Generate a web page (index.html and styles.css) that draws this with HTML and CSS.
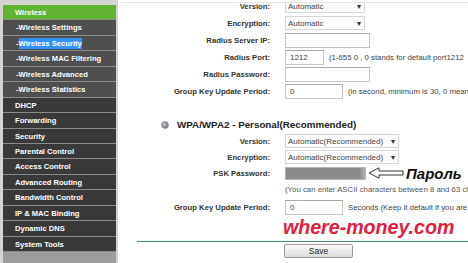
FILE: index.html
```html
<!DOCTYPE html>
<html lang="en">
<head>
    <meta charset="UTF-8">
    <meta name="viewport" content="width=device-width, initial-scale=1.0">
    <title>Wireless Security</title>
    <link rel="stylesheet" href="styles.css">
</head>
<body>
    <div class="page">
        <div class="side">
            <ul class="menu">
                <li class="on"><a href="#">Wireless</a></li>
                <li class="sub"><a href="#">-Wireless Settings</a></li>
                <li class="sub"><a href="#">-<span class="pick">Wireless Security</span></a></li>
                <li class="sub"><a href="#">-Wireless MAC Filtering</a></li>
                <li class="sub"><a href="#">-Wireless Advanced</a></li>
                <li class="sub"><a href="#">-Wireless Statistics</a></li>
                <li><a href="#">DHCP</a></li>
                <li><a href="#">Forwarding</a></li>
                <li><a href="#">Security</a></li>
                <li><a href="#">Parental Control</a></li>
                <li><a href="#">Access Control</a></li>
                <li><a href="#">Advanced Routing</a></li>
                <li><a href="#">Bandwidth Control</a></li>
                <li><a href="#">IP &amp; MAC Binding</a></li>
                <li><a href="#">Dynamic DNS</a></li>
                <li><a href="#">System Tools</a></li>
            </ul>
            <div class="side_foot"></div>
        </div>

        <div class="con">
            <!-- Radius (Enterprise) -->
            <div class="sec1">
                <div class="row">
                    <label>Version:</label>
                    <div class="sel w80"><span>Automatic</span><i>&#9662;</i></div>
                </div>
                <div class="row">
                    <label>Encryption:</label>
                    <div class="sel w80"><span>Automatic</span><i>&#9662;</i></div>
                </div>
                <div class="row">
                    <label>Radius Server IP:</label>
                    <input class="txt w85" type="text" value="">
                </div>
                <div class="row">
                    <label>Radius Port:</label>
                    <input class="txt w39" type="text" value="1212">
                    <span class="hint">(1-655 0 , 0 stands for default port1212</span>
                </div>
                <div class="row">
                    <label>Radius Password:</label>
                    <input class="txt w85" type="text" value="">
                </div>
                <div class="row">
                    <label>Group Key Update Period:</label>
                    <input class="txt w58" type="text" value="0">
                    <span class="hint">(in second, minimum is 30, 0 means no update)</span>
                </div>
            </div>

            <!-- WPA/WPA2 Personal -->
            <div class="sec2">
                <div class="title">
                    <span class="radio"></span>
                    <b>WPA/WPA2 - Personal(Recommended)</b>
                </div>
                <div class="row">
                    <label>Version:</label>
                    <div class="sel w114"><span>Automatic(Recommended)</span><i>&#9662;</i></div>
                </div>
                <div class="row">
                    <label>Encryption:</label>
                    <div class="sel w114"><span>Automatic(Recommended)</span><i>&#9662;</i></div>
                </div>
                <div class="row">
                    <label>PSK Password:</label>
                    <div class="psk"></div>
                    <svg class="arrow" width="36" height="12" viewBox="0 0 36 12">
                        <polygon points="1,6 11,0.8 11,4 35,4 35,8 11,8 11,11.2" fill="#fff" stroke="#333" stroke-width="1"/>
                    </svg>
                    <span class="word">Пароль</span>
                </div>
                <div class="row note">
                    <span class="hint">(You can enter ASCII characters between 8 and 63 characters or 8 and 64 Hexadecimal characters.)</span>
                </div>
                <div class="row gk">
                    <label>Group Key Update Period:</label>
                    <input class="txt w58" type="text" value="0">
                    <span class="hint">Seconds (Keep it default if you are not sure, minimum is 30, 0 means no update)</span>
                </div>
                <div class="mark">where-money.com</div>
            </div>

            <div class="foot">
                <button type="button" class="btn">Save</button>
            </div>
        </div>
    </div>
</body>
</html>
```

FILE: styles.css
```css
/* 초기화 */
body,ul{margin: 0; padding: 0;}
ul{list-style: none;}
a{text-decoration: none; color: #fff;}
body{
    font-family: "Liberation Sans", Arial, sans-serif;
    background-color: #fff; color: #333;
    width: 468px; height: 263px; overflow: hidden;
}

/* 레이아웃 */
.page{display: flex; height: 263px;}

/* 왼쪽 메뉴 */
.side{
    width: 113px; flex: none;
    display: flex; flex-direction: column;
    background-color: #d4d4d4;
    padding: 5px 2px 0 3px;
}
.menu li a{
    display: block; height: 14.44px; line-height: 15px;
    padding-left: 12px;
    font-size: 7.6px; font-weight: bold;
    background-color: #393939;
    border-bottom: 1px solid #8a8a8a;
    white-space: nowrap; overflow: hidden;
}
.menu li.sub a{background-color: #4f4f4f; padding-left: 13px;}
.menu li.on a{background-color: #62b332; padding-left: 12px;}
.menu .pick{background-color: #3392ff; padding: 1px 0;}
.side_foot{flex: 1; background-color: #9c9c9c;}

/* 오른쪽 내용 */
.con{
    flex: 1; min-width: 0;
    margin-left: 2px; margin-top: 2px;
    border-top: 1px solid #e4e4e4;
    overflow: hidden;
}
.sec1{margin-top: -5.5px;}
.row{display: flex; align-items: center; height: 17px; white-space: nowrap;}
.row label{
    flex: none; width: 150px; margin-right: 15px;
    text-align: right;
    font-size: 7.7px; font-weight: bold; color: #333;
}
.hint{font-size: 7.8px; color: #444; margin-left: 5px;}

.sel{
    display: flex; justify-content: space-between; align-items: center;
    box-sizing: border-box; height: 14px; padding: 0 3px 0 2px;
    border: 1px solid #d6d6d6; background-color: #fcfcfc;
    font-size: 8px; color: #444;
}
.sel i{font-style: normal; font-size: 8px; color: #333;}
.w80{width: 80px;}
.w114{width: 114px;}

.txt{
    box-sizing: border-box; height: 15px; margin: 0; padding: 0 4px;
    border: 1px solid #c4c4c4; border-top-color: #a8a8a8;
    font-family: inherit; font-size: 8px; color: #444;
    background-color: #fff; outline: none;
}
.w85{width: 85px;}
.w39{width: 39px;}
.w58{width: 58px;}

.sec2{margin-top: 16.5px;}
.sec2 .row{height: 16px;}
.title{display: flex; align-items: center; height: 17px; padding-left: 41px;}
.title b{font-size: 9.8px; color: #222; white-space: nowrap;}
.radio{
    width: 6px; height: 6px; border-radius: 50%; margin-right: 8px;
    background: radial-gradient(circle at 40% 40%, #c8ccd2, #6d737c 70%);
    border: 1px solid #9aa0a8;
}

.psk{
    box-sizing: border-box; width: 81px; height: 13px;
    border: 1px solid #b4b4b4;
    background: linear-gradient(to right, #8a8a8a 92%, #b0b0b0);
}
.arrow{margin-left: 2px; flex: none;}
.word{
    margin-left: 2px;
    font-size: 15px; font-weight: bold; font-style: italic; color: #111;
}

.note{padding-left: 165px;}
.note .hint{margin-left: 0; color: #555;}
.sec2 .gk{margin-top: 2px;}

.mark{
    height: 25px; line-height: 25px; padding-left: 163px;
    font-size: 19.6px; font-weight: bold; font-style: italic;
    color: #e1203d; white-space: nowrap;
}

.foot{
    margin: 1px 0 0 17px; padding-left: 147px;
    border-top: 1px solid #4d8a7c;
    height: 18px; display: flex; align-items: center;
}
.btn{
    width: 69px; height: 14px; padding: 0;
    font-family: inherit; font-size: 8.5px; color: #222;
    border: 1px solid #9a9a9a; border-radius: 2px;
    background: linear-gradient(#fafafa, #dcdcdc);
}
```
